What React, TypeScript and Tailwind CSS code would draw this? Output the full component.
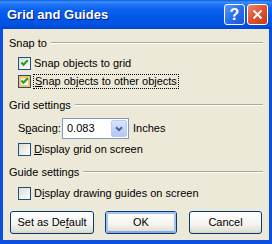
import React from "react";

const font = "font-['Liberation_Sans',Arial,sans-serif]";

function CheckBox({ checked, hover }: { checked?: boolean; hover?: boolean }) {
  return (
    <span className="relative inline-block h-[13px] w-[13px] shrink-0 border border-[#1c5180] bg-[linear-gradient(135deg,#dcdcd7_0%,#f4f4f1_70%,#ffffff_100%)]">
      {hover && (
        <span className="absolute inset-0 border-2 border-[#f9c35f] bg-[linear-gradient(135deg,#fbd58e,#fff2cf)]">
          <span className="absolute inset-0 bg-[linear-gradient(135deg,#e6e5df,#fbfbf9)]" />
        </span>
      )}
      {checked && (
        <svg className="absolute left-[1px] top-[1px]" width="9" height="9" viewBox="0 0 9 9">
          <path d="M1.5 3.5 L3.5 5.7 L7.8 1.2" fill="none" stroke="#21a121" strokeWidth="2.1" />
        </svg>
      )}
    </span>
  );
}

function Header({ label }: { label: string }) {
  return (
    <div className="flex h-[14px] items-center">
      <span className="leading-[14px]">{label}</span>
      <span className="ml-[4px] h-[2px] flex-1 border-t border-b border-t-[#aca899] border-b-white" />
    </div>
  );
}

function XpButton({ children, w, isDefault, className }: { children: React.ReactNode; w: string; isDefault?: boolean; className?: string }) {
  return (
    <div
      className={`${w} ${className ?? ""} relative flex h-[23px] items-center justify-center rounded-[3px] border border-[#003c74] bg-[linear-gradient(to_bottom,#ffffff_0%,#f4f3ee_60%,#e3e1d6_90%,#d6d0c5_100%)]`}
    >
      {isDefault && <span className="absolute inset-0 rounded-[2px] border-2 border-[#a9c0f2] border-b-[#8aa7e8]" />}
      <span className="relative">{children}</span>
    </div>
  );
}

export default function App() {
  return (
    <div className={`${font} h-[244px] w-[272px] overflow-hidden bg-[#0a4fdf] text-[11px] text-black`}>
      {/* title bar */}
      <div className="flex h-[29px] items-center bg-[linear-gradient(to_bottom,#0a5ae6_0%,#3e8ff9_7%,#1f73f5_16%,#0861ef_35%,#0058ea_60%,#0053e2_85%,#0045d2_100%)] pl-[7px] pr-[4px]">
        <span className="text-[13px] font-bold tracking-[0px] text-white [text-shadow:1px_1px_#0b1d8a]">Grid and Guides</span>
        <div className="ml-auto flex gap-[2px]">
          <div className="flex h-[21px] w-[21px] items-center justify-center rounded-[3px] border border-white bg-[linear-gradient(135deg,#5a98fb_0%,#2a6ef0_50%,#1a55d8_100%)]">
            <span className="font-['Liberation_Sans',Arial,sans-serif] text-[16px] font-bold leading-none text-white">?</span>
          </div>
          <div className="flex h-[21px] w-[21px] items-center justify-center rounded-[3px] border border-white bg-[linear-gradient(135deg,#ed8a6b_0%,#e0552f_45%,#c23d19_100%)]">
            <svg width="11" height="11" viewBox="0 0 11 11">
              <path d="M1.5 1.5 L9.5 9.5 M9.5 1.5 L1.5 9.5" stroke="#fff" strokeWidth="2" />
            </svg>
          </div>
        </div>
      </div>

      {/* body */}
      <div className="mx-[3px] flex h-[211px] flex-col bg-[#ece9d8] pl-[6px] pr-[6px]">
        <div className="mt-[7px]">
          <Header label="Snap to" />
        </div>
        <div className="ml-[9px] mt-[6px] flex h-[15px] items-center">
          <CheckBox checked />
          <span className="ml-[2px] px-[1px]">Snap objects to grid</span>
        </div>
        <div className="ml-[9px] mt-[3px] flex h-[15px] items-center">
          <CheckBox checked hover />
          <span className="ml-[2px] border border-dotted border-black px-[1px] leading-[13px]">
            <u>S</u>nap objects to other objects
          </span>
        </div>

        <div className="mt-[9px]">
          <Header label="Grid settings" />
        </div>
        <div className="ml-[9px] mt-[6px] flex h-[21px] items-center">
          <span className="w-[44px]">
            S<u>p</u>acing:
          </span>
          <div className="flex h-[21px] w-[67px] items-center border border-[#7f9db9] bg-white p-[1px]">
            <span className="ml-[3px] flex-1">0.083</span>
            <div className="flex h-[17px] w-[16px] items-center justify-center rounded-[2px] border border-[#b9cbf3] bg-[linear-gradient(to_bottom,#dae5fd_0%,#c1d3fb_55%,#b3c8f7_100%)]">
              <svg width="8" height="6" viewBox="0 0 8 6">
                <path d="M1 1.2 L4 4.2 L7 1.2" fill="none" stroke="#4d6185" strokeWidth="2" />
              </svg>
            </div>
          </div>
          <span className="ml-[4px]">Inches</span>
        </div>
        <div className="ml-[9px] mt-[3px] flex h-[15px] items-center">
          <CheckBox />
          <span className="ml-[2px] px-[1px]">
            <u>D</u>isplay grid on screen
          </span>
        </div>

        <div className="mt-[8px]">
          <Header label="Guide settings" />
        </div>
        <div className="ml-[9px] mt-[7px] flex h-[15px] items-center">
          <CheckBox />
          <span className="ml-[2px] px-[1px]">
            D<u>i</u>splay drawing guides on screen
          </span>
        </div>

        <div className="ml-[1px] mt-[10px] flex">
          <XpButton w="w-[84px]">
            Set as De<u>f</u>ault
          </XpButton>
          <XpButton w="w-[72px]" className="ml-[11px]" isDefault>
            OK
          </XpButton>
          <XpButton w="w-[73px]" className="ml-[12px]">
            Cancel
          </XpButton>
        </div>
      </div>
    </div>
  );
}
